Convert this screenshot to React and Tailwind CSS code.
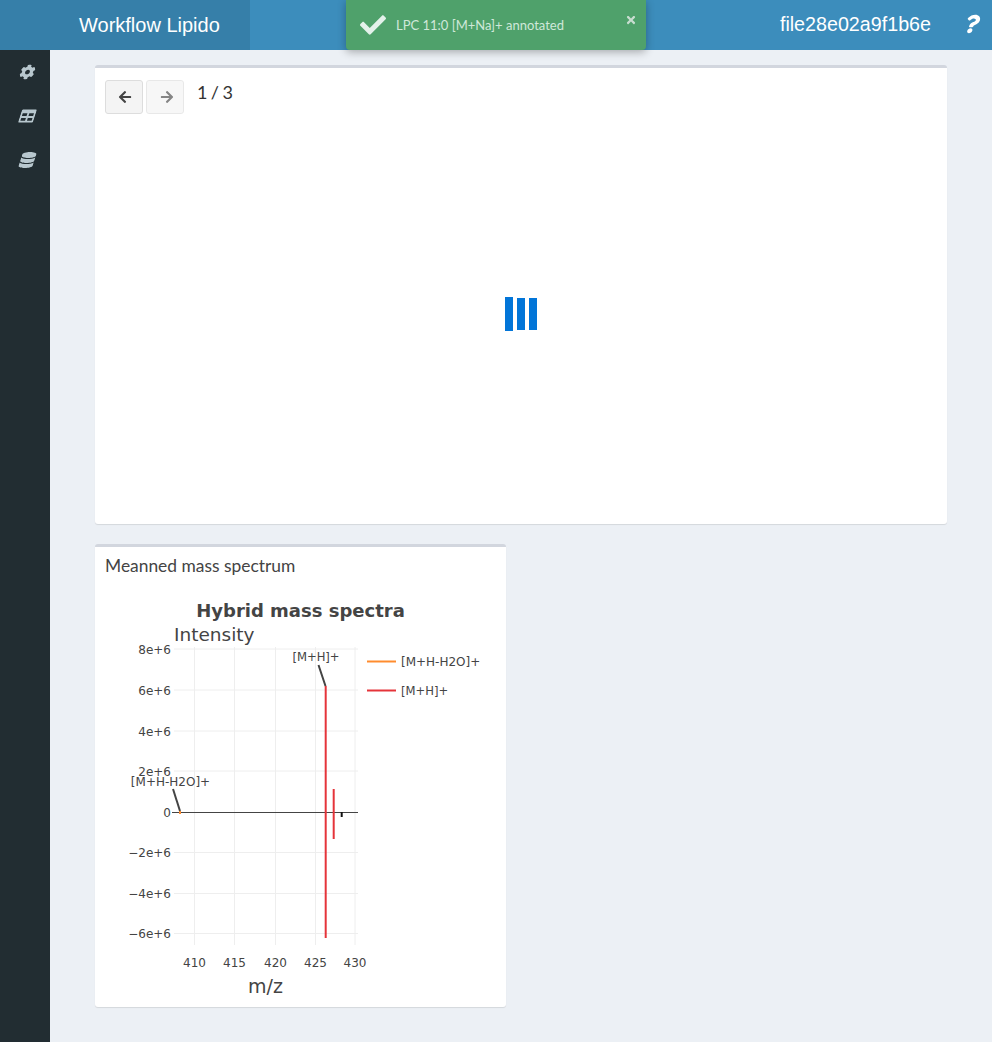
import React from "react";
import { FaCog, FaTable, FaDatabase, FaCheck, FaTimes, FaArrowLeft, FaArrowRight, FaQuestion } from "react-icons/fa";

const yTicks = [
  { y: 649, label: "8e+6" },
  { y: 690, label: "6e+6" },
  { y: 731, label: "4e+6" },
  { y: 771, label: "2e+6" },
  { y: 812.5, label: "0" },
  { y: 852.5, label: "−2e+6" },
  { y: 893.5, label: "−4e+6" },
  { y: 933.5, label: "−6e+6" },
];

const xTicks = [
  { x: 194.5, label: "410" },
  { x: 234.5, label: "415" },
  { x: 275.5, label: "420" },
  { x: 315.5, label: "425" },
  { x: 355, label: "430" },
];

// page coordinates are used as the viewBox so numbers read straight off the screenshot
const SpectrumChart = () => (
  <svg viewBox="95 585 411 420" className="block w-[411px] h-[420px]" fontFamily="'DejaVu Sans', sans-serif">
    {xTicks.map((t) => (
      <line key={t.x} x1={t.x} x2={t.x} y1="647" y2="945" stroke="#eeeeee" strokeWidth="1" />
    ))}
    {yTicks.filter((t) => t.label !== "0").map((t) => (
      <line key={t.y} x1="174" x2="358" y1={t.y} y2={t.y} stroke="#eeeeee" strokeWidth="1" />
    ))}
    <line x1="172" x2="358" y1="812.5" y2="812.5" stroke="#444444" strokeWidth="1" />

    <line x1="325.7" x2="325.7" y1="686" y2="938" stroke="#e5343a" strokeWidth="2" />
    <line x1="333.7" x2="333.7" y1="789" y2="839" stroke="#e5343a" strokeWidth="2" />
    <line x1="341.7" x2="341.7" y1="812" y2="817" stroke="#111111" strokeWidth="2" />
    <line x1="180" x2="180" y1="811" y2="814" stroke="#ff8c2e" strokeWidth="2" />

    <line x1="318.5" y1="665" x2="325.5" y2="686" stroke="#444444" strokeWidth="2" />
    <line x1="173" y1="789" x2="180" y2="811" stroke="#444444" strokeWidth="2" />

    <text x="300.5" y="616.5" textAnchor="middle" fontSize="18" fontWeight="700" fill="#444444">Hybrid mass spectra</text>
    <text x="174" y="641" fontSize="18.5" fill="#444444">Intensity</text>

    {yTicks.map((t) => (
      <text key={t.label} x="171" y={t.y + 4.5} textAnchor="end" fontSize="12" fill="#444444">{t.label}</text>
    ))}
    {xTicks.map((t) => (
      <text key={t.label} x={t.x} y="967" textAnchor="middle" fontSize="12" fill="#444444">{t.label}</text>
    ))}
    <text x="265.5" y="993" textAnchor="middle" fontSize="19" fill="#444444">m/z</text>

    <text x="316" y="661" textAnchor="middle" fontSize="11.6" fill="#444444">[M+H]+</text>
    <text x="170.5" y="786" textAnchor="middle" fontSize="12" fill="#444444">[M+H-H2O]+</text>

    <line x1="367" x2="396" y1="661.5" y2="661.5" stroke="#ff8c2e" strokeWidth="2" />
    <text x="401" y="666" fontSize="12" fill="#444444">[M+H-H2O]+</text>
    <line x1="367" x2="396" y1="690.5" y2="690.5" stroke="#e5343a" strokeWidth="2" />
    <text x="401" y="695" fontSize="11.6" fill="#444444">[M+H]+</text>
  </svg>
);

const App = () => {
  return (
    <div className="relative min-h-[1042px] bg-[#ecf0f5] font-['Lato',sans-serif] text-[#444444] overflow-hidden">
      <header className="flex h-[50px] bg-[#3c8dbc] text-white font-['Liberation_Sans',sans-serif]">
        <div className="w-[250px] bg-[#367fa9] pl-[79px] text-[20px] leading-[50px]">Workflow Lipido</div>
        <div className="flex-1 flex justify-end items-center">
          <span className="text-[19.7px] mr-[34px]">file28e02a9f1b6e</span>
          <FaQuestion className="w-[14px] h-[22px] mr-[13px] -mt-[3px] -skew-x-[18deg]" />
        </div>
      </header>

      <div className="absolute left-[346px] top-0 w-[300px] h-[50px] bg-[#4fa16b] rounded-b-[4px] shadow-[0_2px_8px_rgba(0,0,0,0.3)] flex items-center pl-[14px] text-[#cfe8da]">
        <FaCheck className="w-[26px] h-[26px] text-[#e3f1ea]" />
        <span className="ml-[10px] mt-[1px] text-[13px]">LPC 11:0 [M+Na]+ annotated</span>
        <FaTimes className="absolute right-[9px] top-[14px] w-[12px] h-[12px] text-[#c8ddd0]" />
      </div>

      <div className="flex min-h-[992px]">
        <aside className="w-[50px] bg-[#222d32] flex flex-col items-center pt-[14px] gap-[28px] pl-[4px] text-[#b8c7ce]">
          <FaCog className="w-[15px] h-[16px] -skew-x-[18deg]" />
          <FaTable className="w-[15px] h-[16px] -skew-x-[18deg]" />
          <FaDatabase className="w-[15px] h-[16px] -skew-x-[18deg]" />
        </aside>

        <main className="flex-1 px-[45px] pt-[15px] flex flex-col gap-[20px]">
          <section className="relative h-[459px] bg-white border-t-[3px] border-[#d2d6de] rounded-[3px] shadow-[0_1px_1px_rgba(0,0,0,0.1)] pt-[12px] pl-[10px]">
            <div className="flex items-start gap-[3px]">
              <button className="w-[38px] h-[34px] flex items-center justify-center bg-[#f4f4f4] border border-[#dddddd] rounded-[3px] text-[#444444]">
                <FaArrowLeft className="w-[14px] h-[14px] ml-[2px]" />
              </button>
              <button className="w-[38px] h-[34px] flex items-center justify-center bg-[#f4f4f4] border border-[#dddddd] rounded-[3px] text-[#444444] opacity-65">
                <FaArrowRight className="w-[14px] h-[14px] ml-[3px]" />
              </button>
              <span className="ml-[10px] text-[18px] text-[#333333] leading-[25px] tracking-[-0.6px]">1 / 3</span>
            </div>
            <div className="absolute inset-x-0 top-[229px] flex justify-center items-center gap-[4px]">
              <div className="w-[8px] h-[34px] bg-[#0275d8]" />
              <div className="w-[8px] h-[32px] bg-[#0275d8]" />
              <div className="w-[8px] h-[32px] bg-[#0275d8]" />
            </div>
          </section>

          <section className="w-[411px] h-[463px] bg-white border-t-[3px] border-[#d2d6de] rounded-[3px] shadow-[0_1px_1px_rgba(0,0,0,0.1)]">
            <h3 className="pl-[10px] pt-[7px] h-[38px] text-[17.4px] leading-[24px]">Meanned mass spectrum</h3>
            <SpectrumChart />
          </section>
        </main>
      </div>
    </div>
  );
};

export default App;
